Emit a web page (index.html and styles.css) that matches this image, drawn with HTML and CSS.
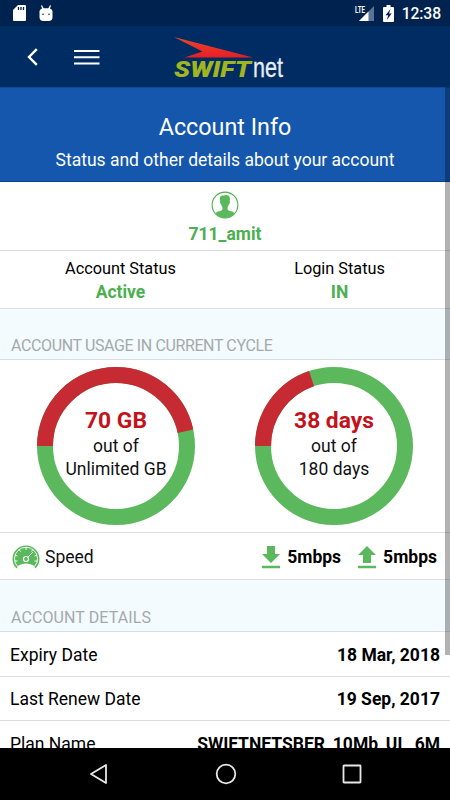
FILE: index.html
```html
<!DOCTYPE html>
<html lang="en">
<head>
  <meta charset="UTF-8">
  <title>Account Info</title>
  <link rel="stylesheet" href="styles.css">
</head>
<body>

  <div class="statusbar">
    <svg class="sd" width="13" height="16" viewBox="0 0 13 16"><path fill="#fff" d="M5 0h7q1 0 1 1v14q0 1-1 1H1q-1 0-1-1V5z"/><path stroke="#00224f" stroke-width="1.3" d="M5.5 2v3M8 2v3M10.500 2v3"/></svg>
    <svg width="14" height="17" viewBox="0 0 14 17"><path fill="#fff" d="M.5 6Q1 4 3 3.500L2 .5l1-.3 1.700 3h4.600l1.700-3 1 .3-1 3q2 .5 2.500 2.500v6q0 4-4 4H4.500q-4 0-4-4z"/><circle cx="4" cy="9.300" r=".8" fill="#00224f"/><circle cx="10" cy="9.300" r=".8" fill="#00224f"/></svg>
    <div class="network">
      <svg width="20" height="17" viewBox="0 0 20 17"><path fill="#587394" d="M19 1v15H4z"/><path fill="#fff" d="M13.500 6.500V16H4z"/><path stroke="#00224f" stroke-width="1" d="M10.500 1v8"/><text class="lte" x="0" y="7.500" textLength="10" lengthAdjust="spacingAndGlyphs">LTE</text></svg>
      <svg class="battery" width="11" height="17" viewBox="0 0 11 17"><path fill="#fff" d="M3.500 0h4v2H10q1 0 1 1v13q0 1-1 1H1q-1 0-1-1V3q0-1 1-1h2.500z"/><path fill="#00224f" d="M7.500 4L2.500 10.200h2.700L3.800 15l4.900-6.500H6z"/></svg>
      <span class="clock">12:38</span>
    </div>
  </div>

  <div class="topbar">
    <svg class="back" width="12" height="18" viewBox="0 0 12 18"><path fill="none" stroke="#fff" stroke-width="2.400" d="M9.800 1.200L2 9l7.800 7.800"/></svg>
    <svg class="menu" width="26" height="17" viewBox="0 0 26 17"><path stroke="#fff" stroke-width="2" d="M0 3h25.500M0 9.300h25.500M0 15.500h25.500"/></svg>
    <svg class="logo" width="114" height="52" viewBox="0 0 114 52">
      <defs>
        <linearGradient id="red" x2="0" y2="1"><stop offset="0" stop-color="#e8472b"/><stop offset="1" stop-color="#e81e25"/></linearGradient>
      </defs>
      <path fill="url(#red)" d="M1 6L80 26.500H11.500L29.500 20.500z"/>
      <text class="swift" x="1" y="46" textLength="77" lengthAdjust="spacingAndGlyphs">SWIFT</text>
      <text class="net" x="80" y="46" textLength="30" lengthAdjust="spacingAndGlyphs">net</text>
    </svg>
  </div>

  <div class="content">
    <div class="banner">
      <h1><span>Account Info</span></h1>
      <p>Status and other details about your account</p>
    </div>

    <div class="user">
      <svg width="28" height="28" viewBox="0 0 28 28"><circle cx="14" cy="14" r="12.900" fill="#fff" stroke="#4caf50" stroke-width="1.100"/><path fill="#5cb85c" d="M8.800 8.500Q8.500 4 12.500 4.500q3-1.200 5 .2 2 1.300 1.200 5 .6.500 0 2.500-.4 1.200-.9 1.300-.5 1.800-1.200 2.700v2.300q.5 1 2.500 1.600 3 .6 4.400 1.800Q20 27 14 27T4.500 21.900q1.400-1.200 4.400-1.800 2-.6 2.500-1.600v-2.300q-.8-.9-1.200-2.700-.5-.1-.9-1.300-.6-2-.1-2.500z"/></svg>
      <span class="value">711_amit</span>
    </div>

    <div class="status">
      <div class="account">
        <span class="label">Account Status</span>
        <span class="value">Active</span>
      </div>
      <div class="login">
        <span class="label">Login Status</span>
        <span class="value">IN</span>
      </div>
    </div>

    <h2 class="usage-title"><span>ACCOUNT USAGE IN CURRENT CYCLE</span></h2>

    <div class="usage">
      <div class="ring">
        <svg width="158" height="158" viewBox="0 0 158 158"><circle cx="79" cy="79" r="71" pathLength="360"/><circle class="used" cx="79" cy="79" r="71" pathLength="360" stroke-dasharray="168 360"/></svg>
        <div class="ring-text"><b>70 GB</b><span>out of</span><span>Unlimited GB</span></div>
      </div>
      <div class="ring">
        <svg width="158" height="158" viewBox="0 0 158 158"><circle cx="79" cy="79" r="71" pathLength="360"/><circle class="used" cx="79" cy="79" r="71" pathLength="360" stroke-dasharray="71.500 360"/></svg>
        <div class="ring-text"><b>38 days</b><span>out of</span><span>180 days</span></div>
      </div>
    </div>

    <div class="speed">
      <svg class="gauge" width="28" height="24" viewBox="0 0 28 24">
        <path fill="#5cb85c" d="M4.500 23.500A13.500 13.500 0 1 1 23.500 23.500L21.500 21Q14 16.500 6.500 21z"/>
        <path fill="none" stroke="#fff" stroke-width=".9" d="M5.500 21.500A11.500 11.500 0 1 1 22.500 21.500Q14 16.500 5.500 21.500z"/>
        <path stroke="#fff" stroke-width=".9" d="M14 2v3M7 4.500l1.500 2M21 4.500l-1.500 2M3 10l2.500 1M25 10l-2.500 1M2.500 16h3M25.500 16h-3M15.500 12.500L21 7"/>
        <circle cx="14" cy="14" r="2.500" fill="#5cb85c" stroke="#fff" stroke-width="1.200"/>
      </svg>
      <span class="name">Speed</span>
      <svg class="down" width="18" height="23" viewBox="0 0 18 23"><path fill="#5cb85c" d="M5 0h8v8h5l-9 9-9-9h5zM0 19.800h18v2.400H0z"/></svg>
      <b>5mbps</b>
      <svg class="up" width="18" height="23" viewBox="0 0 18 23"><path fill="#5cb85c" d="M9 0l9 9h-5v8H5V9H0zM0 19.800h18v2.400H0z"/></svg>
      <b>5mbps</b>
    </div>

    <h2 class="details-title"><span>ACCOUNT DETAILS</span></h2>

    <div class="row"><span>Expiry Date</span><b>18 Mar, 2018</b></div>
    <div class="row"><span>Last Renew Date</span><b>19 Sep, 2017</b></div>
    <div class="row"><span>Plan Name</span><b class="plan">SWIFTNETSBER_10Mb_UL_6M</b></div>

    <div class="scrollbar"></div>
  </div>

  <div class="navbar">
    <svg width="20" height="22" viewBox="0 0 20 22"><path d="M17 2v18L2 11z"/></svg>
    <svg width="22" height="22" viewBox="0 0 22 22"><circle cx="11" cy="11" r="9.300"/></svg>
    <svg width="20" height="20" viewBox="0 0 20 20"><rect x="1.500" y="1.500" width="17" height="17" rx=".5"/></svg>
  </div>

</body>
</html>
```
FILE: styles.css
```css
* { box-sizing: border-box; }
body { margin: 0; width: 450px; height: 800px; overflow: hidden; display: flex; flex-direction: column; background: #fff; color: #111; font-family: Roboto, sans-serif; font-size: 17.5px; }
svg { display: block; flex: none; overflow: visible; }
h1, h2, p { margin: 0; font-weight: 400; }
b { font-weight: 700; color: #000; }

.statusbar { height: 26px; flex: none; display: flex; align-items: center; padding: 0 9px 0 13px; background: #00224f; color: #fff; }
.sd { margin-right: 13px; }
.network { margin-left: auto; display: flex; align-items: center; }
.lte { font: 700 8.5px Roboto, sans-serif; fill: #fff; }
.battery { margin: 0 8px 0 8px; }
.clock { font-size: 15.7px; font-weight: 500; line-height: 26px; padding-top: 2px; letter-spacing: -.1px; }

.topbar { height: 61px; flex: none; display: flex; align-items: center; padding-left: 27px; background: #002c64; }
.menu { margin-left: 35px; }
.logo { margin-left: 73px; }
.swift { font: italic 900 22.5px Roboto, sans-serif; fill: #a1b51f; }
.net { font: 400 28px "Liberation Sans", sans-serif; fill: #e8eef8; stroke: #e8eef8; stroke-width: .3px; }

.content { position: relative; flex: 1; min-height: 0; overflow: hidden; }
.scrollbar { position: absolute; top: 0; right: 0; width: 5px; height: 568px; background: rgba(0, 0, 0, .3); }

.banner { height: 95px; padding-top: 24px; text-align: center; color: #fff; background: #1457ad; border-top: 1px solid #10498f; border-bottom: 1px solid #0c4292; }
.banner h1 { font-size: 23.3px; line-height: 30px; }
.banner p { line-height: 22px; margin-top: 7px; }

.user { height: 69px; padding-top: 9px; display: flex; flex-direction: column; align-items: center; border-bottom: 1px solid #ddd; }
.value { font-weight: 700; line-height: 22px; color: #4caf50; }
.user .value { margin-top: 4px; }
.status { height: 58px; padding-top: 7px; display: flex; border-bottom: 1px solid #ddd; }
.status > div { display: flex; flex-direction: column; align-items: center; }
.account { width: 241px; }
.login { width: 197px; }
.label { font-size: 16.3px; line-height: 22px; color: #000; }
.status .value { margin-top: 1px; }

h2 { padding-left: 11px; background: #f3fbff; color: #a6a9ab; font-size: 16px; line-height: 22px; border-bottom: 1px solid #ddd; }
.usage-title { height: 51px; padding-top: 26px; letter-spacing: -.38px; }
.details-title { height: 52px; padding-top: 27px; letter-spacing: .1px; }

.usage { height: 173px; padding: 7px 37px 0 37px; display: flex; justify-content: space-between; border-bottom: 1px solid #ddd; }
.ring { display: grid; }
.ring > * { grid-area: 1 / 1; }
.ring circle { fill: none; stroke: #5cb85c; stroke-width: 16; transform: rotate(180deg); transform-origin: center; }
.ring .used { stroke: #c62a33; }
.ring-text { display: flex; flex-direction: column; align-items: center; padding-top: 40px; line-height: 23px; }
.ring-text b { font-size: 22.8px; line-height: 28px; color: #c3121b; }

.speed { height: 47px; display: flex; align-items: center; padding: 2px 13px 0 12px; border-bottom: 1px solid #ddd; }
.name { margin: 0 auto 0 5px; }
.down, .up { margin-right: 7px; }
.up { margin-left: 17px; }

.row { height: 44.500px; display: flex; align-items: center; justify-content: space-between; padding: 2px 10px 0; border-bottom: 1px solid #ddd; color: #000; }

.navbar { height: 52px; flex: none; display: flex; align-items: center; justify-content: space-between; padding: 0 88px 0 89px; background: #000; }
.navbar svg { fill: none; stroke: #e8e8e8; stroke-width: 1.8px; stroke-linejoin: round; }
```
